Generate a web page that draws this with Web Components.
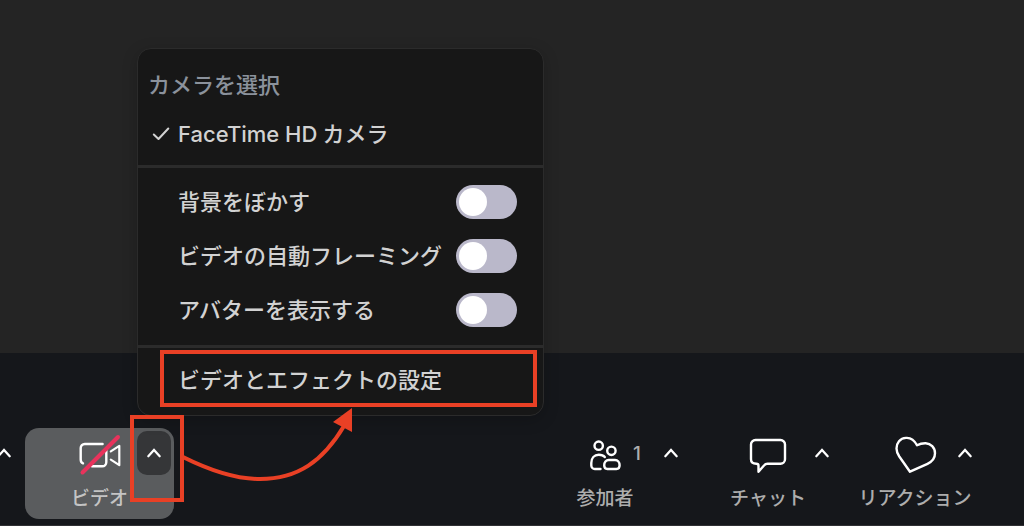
<!DOCTYPE html>
<html lang="ja">
<head>
<meta charset="utf-8">
<title>ビデオメニュー</title>
<style>
  body {
    margin: 0;
    background: #242424;
    color: #d2d2d2;
    font-family: Inter, "Noto Sans CJK JP", sans-serif;
    font-weight: 500;
  }
</style>
</head>
<body>
<meeting-window>
  <tool-bar>
    <caret-button slot="start" label="オーディオのオプション"></caret-button>
    <tool-item slot="start" class="active" label="ビデオ" icon="video">
      <camera-menu></camera-menu>
      <caret-callout></caret-callout>
    </tool-item>
    <tool-item class="people" label="参加者" icon="people" count="1"></tool-item>
    <tool-item class="chat" label="チャット" icon="chat"></tool-item>
    <tool-item label="リアクション" icon="heart"></tool-item>
  </tool-bar>
</meeting-window>

<script>
const define = (name, render) => customElements.define(name, class extends HTMLElement {
  connectedCallback() {
    if (!this.shadowRoot) this.attachShadow({ mode: 'open' }).innerHTML = render(this);
  }
});

const icons = {
  video: `<g stroke="#fff" stroke-width="2.400">
      <path d="M5 30.300C3.500 29.800 2.700 28.500 2.700 26.500V15a4 4 0 0 1 4-4H24.600"/>
      <path d="M28.300 17.500v11.800a4 4 0 0 1-4 4H14"/>
      <path stroke-width="2.200" d="M32.800 18.300L41.300 12.800V32.200L32.800 26.700"/>
    </g><path d="M4.500 39.500L40 4" stroke="#e8335c" stroke-width="4"/>`,
  people: `<g stroke="#fff" stroke-width="2.400">
      <circle cx="15.700" cy="12.700" r="4.200"/><circle cx="28.400" cy="17.800" r="4.200"/>
      <path d="M17.500 36h-5.700a3.500 3.500 0 0 1-3.500-3.500V30c0-5 3-8.300 7.500-8.300 2.800 0 4.700.7 6 2.300"/>
      <path d="M25.800 27h6.200c2.800 0 4.600 2.200 4.600 5.300 0 2.400-1.200 3.700-3.200 3.700h-9c-2 0-3.200-1.300-3.200-3.700 0-3.100 1.800-5.300 4.600-5.300z"/>
    </g>`,
  chat: `<path stroke="#fff" stroke-width="2.400" d="M9.500 7h25a4.500 4.500 0 0 1 4.500 4.500v14.700a4.500 4.500 0 0 1-4.500 4.500H21.500c-1.500 0-2.500.5-3.500 1.800L12.500 38.800v-6.100c0-1.500-.7-2-2.200-2C7 30.700 5 29 5 26.200V11.500A4.500 4.500 0 0 1 9.500 7z"/>`,
  heart: `<path stroke="#fff" stroke-width="2.400" d="M24 12.300C21.500 7.500 17.500 4.500 13 4.900 7 5.300 3.500 10 3.500 15.500c0 3 1 5.200 2.800 8L17 38.700l17.500-7.900c5-2.300 7.500-5.800 7.500-10.500 0-5.800-4.300-9.800-9.300-10-3.500-.1-6.600.9-8.700 2z"/>`
};

define('meeting-window', () => `
  <style>
    :host { display: flex; flex-direction: column; min-height: 100vh; overflow: hidden; }
    main { flex: 1; }
  </style>
  <main></main>
  <slot></slot>`);

define('tool-bar', () => `
  <style>
    :host {
      display: flex; justify-content: space-between; align-items: stretch;
      box-sizing: border-box; padding: 75px 42px 6px 0;
      background: #15171b; border-bottom: 1px solid #303034;
    }
    div { display: flex; }
    .start { gap: 4px; margin-left: -13px; }
    .main { gap: 19px; }
    .start ::slotted(caret-button) { margin-top: 3px; }
    ::slotted(tool-item) { --tool-width: 124px; --main-width: 114px; }
    ::slotted(tool-item.people) { --tool-width: 140px; }
    ::slotted(tool-item.chat) { --tool-width: 132px; --main-width: 122px; }
    ::slotted(tool-item.active) {
      --tool-width: 149px; --main-width: 149px; --caret-gap: 3px;
      --tool-bg: #5a5c5e; --caret-bg: #353638; --label: #c4c4c4;
    }
  </style>
  <div class="start"><slot name="start"></slot></div>
  <div class="main"><slot></slot></div>`);

define('caret-button', el => `
  <style>
    :host { display: block; }
    button {
      display: grid; place-items: center; width: 34px; height: 44px;
      padding: 0; border: 0; border-radius: 10px; background: var(--caret-bg, none);
    }
  </style>
  <button type="button" aria-label="${el.getAttribute('label')}">
    <svg width="16" height="12" viewBox="0 0 16 12" fill="none" stroke="#fff" stroke-width="2.200" stroke-linecap="round"><path d="M2.300 9.300L8 3l5.700 6.300"/></svg>
  </button>`);

define('tool-item', el => `
  <style>
    :host {
      display: grid; position: relative; width: var(--tool-width);
      border-radius: 14px; background: var(--tool-bg, none);
    }
    .main {
      grid-area: 1 / 1; justify-self: start; width: var(--main-width);
      box-sizing: border-box; padding: 5px 0 7px; border: 0; background: none;
      display: grid; grid-template-columns: 1fr 44px 1fr; row-gap: 9px; align-items: center;
      font: 500 19px/26px Inter, "Noto Sans CJK JP", sans-serif; color: var(--label, #adadad);
    }
    svg { display: block; grid-column: 2; }
    .count { grid-column: 3; justify-self: start; padding-left: 6px; line-height: 42px; align-self: start; }
    .label { grid-column: 1 / -1; text-align: center; }
    caret-button { grid-area: 1 / 1; justify-self: end; align-self: start; margin: 3px var(--caret-gap, 0px) 0 0; }
  </style>
  <button class="main" type="button">
    <svg width="44" height="44" viewBox="0 0 44 44" fill="none" stroke-linecap="round" stroke-linejoin="round" aria-hidden="true">${icons[el.getAttribute('icon')]}</svg>
    ${el.hasAttribute('count') ? `<span class="count">${el.getAttribute('count')}</span>` : ''}
    <span class="label">${el.getAttribute('label')}</span>
  </button>
  <caret-button label="${el.getAttribute('label')}のオプション"></caret-button>
  <slot></slot>`);

define('toggle-row', () => `
  <style>
    :host { display: block; }
    label { display: flex; align-items: center; justify-content: space-between; height: 54px; padding: 0 26px 0 40px; }
    input {
      appearance: none; box-sizing: border-box; width: 61px; height: 34px; margin: 0; padding: 3px;
      border-radius: 17px; background: #bab8ca;
    }
    input::before { content: ""; display: block; width: 28px; height: 28px; border-radius: 50%; background: #fff; }
    input:checked::before { margin-left: auto; }
  </style>
  <label><slot></slot><input type="checkbox" role="switch"></label>`);

define('camera-menu', () => `
  <style>
    :host {
      position: absolute; left: 112px; bottom: calc(100% + 12px); z-index: 1;
      box-sizing: border-box; width: 407px; border: 1px solid #2b2b2b; border-radius: 14px;
      background: #171717; box-shadow: 0 4px 16px #0003;
      font-size: 22px; line-height: 32px; white-space: nowrap;
    }
    section { padding: 7px 0 8px; }
    .camera { padding: 12px 0 7px; }
    h2 { margin: 0; padding: 8px 10px; font: inherit; color: #8b929c; }
    button { border: 0; background: none; color: inherit; font: inherit; text-align: left; }
    .choice { display: flex; align-items: center; gap: 7px; width: 100%; height: 49px; padding: 0 14px; }
    .choice span { display: flex; gap: 5px; }
    hr { margin: 0; border: 0; height: 3px; background: #2b2b2b; }
    .settings { padding: 2px 6px 8px 22px; }
    .settings button {
      display: block; width: 100%; height: 57px; box-sizing: border-box;
      padding: 2px 0 0 14px; border: 4px solid #e94025;
    }
  </style>
  <section class="camera">
    <h2>カメラを選択</h2>
    <button class="choice" type="button">
      <svg width="19" height="16" viewBox="0 0 19 16" fill="none" stroke="#d2d2d2" stroke-width="2" stroke-linecap="round" stroke-linejoin="round"><path d="M1.800 8.500L6.500 13 16.300 2.500"/></svg>
      <span>FaceTime HD<span>カメラ</span></span>
    </button>
  </section>
  <hr>
  <section>
    <toggle-row>背景をぼかす</toggle-row>
    <toggle-row>ビデオの自動フレーミング</toggle-row>
    <toggle-row>アバターを表示する</toggle-row>
  </section>
  <hr>
  <section class="settings"><button type="button">ビデオとエフェクトの設定</button></section>`);

define('caret-callout', () => `
  <style>
    :host { position: absolute; z-index: 2; left: 105px; top: -13px; pointer-events: none; }
    div { box-sizing: border-box; width: 54px; height: 87px; border: 4px solid #e94025; }
    svg { position: absolute; left: 53px; top: -9px; }
  </style>
  <div></div>
  <svg width="172" height="78" viewBox="0 0 172 78" fill="none">
    <path d="M0 51C30 66 55 73 77 73c38 0 63-18 84-53" stroke="#e94025" stroke-width="4"/>
    <path d="M169 2v24l-19-10z" fill="#e94025"/>
  </svg>`);
</script>
</body>
</html>
